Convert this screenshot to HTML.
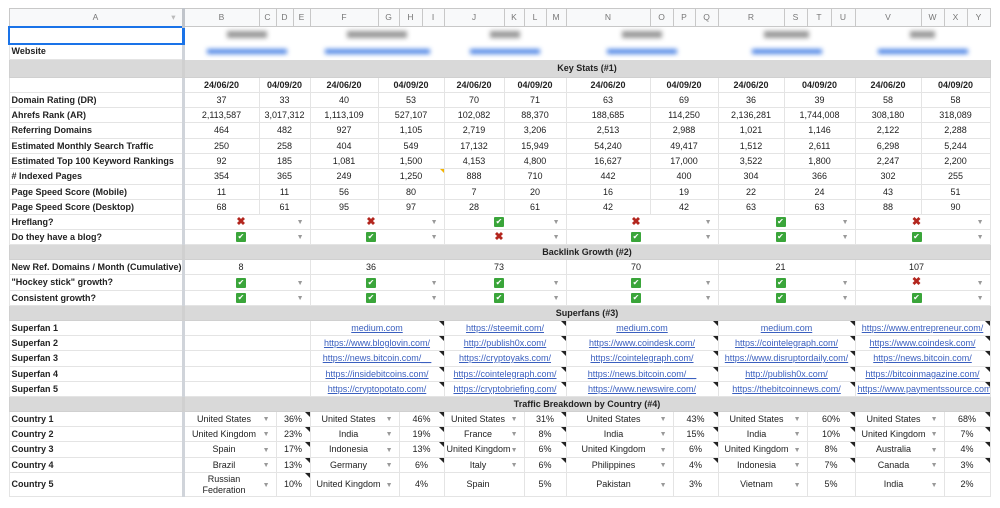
<!DOCTYPE html>
<html><head><meta charset="utf-8"><style>
body{margin:0;background:#fff;width:1000px;height:508px;overflow:hidden;font-family:"Liberation Sans",Arial,sans-serif}
table{position:absolute;left:8px;top:8px;border-collapse:collapse;table-layout:fixed;width:981px}
td{border:1px solid #e4e4e4;font-size:9px;color:#222;padding:0 2px;white-space:nowrap;overflow:hidden;text-align:center;position:relative;line-height:11px}
td.a{text-align:left;font-weight:bold;border-right:3px solid #d0d4da}
tr.h td{background:#f8f9fa;color:#777;border-color:#c8c8c8;font-size:8.5px}
tr.g td{background:#d9d9d9;border-color:#d0d0d0;font-weight:bold}
tr.d td{font-weight:bold}
.x{color:#b3261e;font-size:11px;font-weight:bold}
.c{display:inline-block;width:10px;height:10px;background:#3aa53a;border-radius:1px;color:#fff;font-size:8px;line-height:10px;vertical-align:middle}
.ar{position:absolute;right:6px;top:50%;margin-top:-5px;color:#999;font-size:7px}
td.k{padding-right:14px}
a{color:#3a5fbf;text-decoration:underline}
td.n::after{content:"";position:absolute;right:0;top:0;border-top:5px solid #222;border-left:5px solid transparent}
.bl{display:inline-block;filter:blur(2.5px)}
</style></head><body>
<table>
<colgroup><col style="width:174px"><col style="width:76px"><col style="width:17px"><col style="width:17px"><col style="width:17px"><col style="width:68px"><col style="width:21px"><col style="width:23px"><col style="width:22px"><col style="width:60px"><col style="width:20px"><col style="width:22px"><col style="width:20px"><col style="width:84px"><col style="width:23px"><col style="width:22px"><col style="width:23px"><col style="width:66px"><col style="width:23px"><col style="width:24px"><col style="width:24px"><col style="width:66px"><col style="width:23px"><col style="width:23px"><col style="width:23px"></colgroup>
<tr class="h" style="height:18px"><td style="border-right:3px solid #c0c4ca">A<span style="position:absolute;right:6px;color:#bbb">▾</span></td><td>B</td><td>C</td><td>D</td><td>E</td><td>F</td><td>G</td><td>H</td><td>I</td><td>J</td><td>K</td><td>L</td><td>M</td><td>N</td><td>O</td><td>P</td><td>Q</td><td>R</td><td>S</td><td>T</td><td>U</td><td>V</td><td>W</td><td>X</td><td>Y</td></tr>
<tr style="height:17px"><td class="a" style="border:2px solid #1a73e8;border-right:3px solid #1a73e8"></td><td colspan="4" style="border-color:#fff"><span class="bl" style="width:40px;height:7px;background:#999"></span></td><td colspan="4" style="border-color:#fff"><span class="bl" style="width:60px;height:7px;background:#999"></span></td><td colspan="4" style="border-color:#fff"><span class="bl" style="width:30px;height:7px;background:#999"></span></td><td colspan="4" style="border-color:#fff"><span class="bl" style="width:40px;height:7px;background:#999"></span></td><td colspan="4" style="border-color:#fff"><span class="bl" style="width:45px;height:7px;background:#999"></span></td><td colspan="4" style="border-color:#fff"><span class="bl" style="width:25px;height:7px;background:#999"></span></td></tr>
<tr style="height:16px"><td class="a">Website</td><td colspan="4" style="border-color:#fff"><span class="bl" style="width:80px;height:5px;background:#4f86e6"></span></td><td colspan="4" style="border-color:#fff"><span class="bl" style="width:105px;height:5px;background:#4f86e6"></span></td><td colspan="4" style="border-color:#fff"><span class="bl" style="width:70px;height:5px;background:#4f86e6"></span></td><td colspan="4" style="border-color:#fff"><span class="bl" style="width:70px;height:5px;background:#4f86e6"></span></td><td colspan="4" style="border-color:#fff"><span class="bl" style="width:70px;height:5px;background:#4f86e6"></span></td><td colspan="4" style="border-color:#fff"><span class="bl" style="width:90px;height:5px;background:#4f86e6"></span></td></tr>
<tr class="g" style="height:18px"><td class="a"></td><td colspan="24">Key Stats (#1)</td></tr>
<tr class="d" style="height:15px"><td class="a"></td><td>24/06/20</td><td colspan="3">04/09/20</td><td>24/06/20</td><td colspan="3">04/09/20</td><td>24/06/20</td><td colspan="3">04/09/20</td><td>24/06/20</td><td colspan="3">04/09/20</td><td>24/06/20</td><td colspan="3">04/09/20</td><td>24/06/20</td><td colspan="3">04/09/20</td></tr>
<tr style="height:15px"><td class="a">Domain Rating (DR)</td><td>37</td><td colspan="3">33</td><td>40</td><td colspan="3">53</td><td>70</td><td colspan="3">71</td><td>63</td><td colspan="3">69</td><td>36</td><td colspan="3">39</td><td>58</td><td colspan="3">58</td></tr>
<tr style="height:15px"><td class="a">Ahrefs Rank (AR)</td><td>2,113,587</td><td colspan="3">3,017,312</td><td>1,113,109</td><td colspan="3">527,107</td><td>102,082</td><td colspan="3">88,370</td><td>188,685</td><td colspan="3">114,250</td><td>2,136,281</td><td colspan="3">1,744,008</td><td>308,180</td><td colspan="3">318,089</td></tr>
<tr style="height:16px"><td class="a">Referring Domains</td><td>464</td><td colspan="3">482</td><td>927</td><td colspan="3">1,105</td><td>2,719</td><td colspan="3">3,206</td><td>2,513</td><td colspan="3">2,988</td><td>1,021</td><td colspan="3">1,146</td><td>2,122</td><td colspan="3">2,288</td></tr>
<tr style="height:15px"><td class="a">Estimated Monthly Search Traffic</td><td>250</td><td colspan="3">258</td><td>404</td><td colspan="3">549</td><td>17,132</td><td colspan="3">15,949</td><td>54,240</td><td colspan="3">49,417</td><td>1,512</td><td colspan="3">2,611</td><td>6,298</td><td colspan="3">5,244</td></tr>
<tr style="height:15px"><td class="a">Estimated Top 100 Keyword Rankings</td><td>92</td><td colspan="3">185</td><td>1,081</td><td colspan="3">1,500</td><td>4,153</td><td colspan="3">4,800</td><td>16,627</td><td colspan="3">17,000</td><td>3,522</td><td colspan="3">1,800</td><td>2,247</td><td colspan="3">2,200</td></tr>
<tr style="height:16px"><td class="a"># Indexed Pages</td><td>354</td><td colspan="3">365</td><td>249</td><td colspan="3" style="position:relative">1,250<span style="position:absolute;right:0;top:0;border-top:4px solid #f4b400;border-left:4px solid transparent"></span></td><td>888</td><td colspan="3">710</td><td>442</td><td colspan="3">400</td><td>304</td><td colspan="3">366</td><td>302</td><td colspan="3">255</td></tr>
<tr style="height:15px"><td class="a">Page Speed Score (Mobile)</td><td>11</td><td colspan="3">11</td><td>56</td><td colspan="3">80</td><td>7</td><td colspan="3">20</td><td>16</td><td colspan="3">19</td><td>22</td><td colspan="3">24</td><td>43</td><td colspan="3">51</td></tr>
<tr style="height:15px"><td class="a">Page Speed Score (Desktop)</td><td>68</td><td colspan="3">61</td><td>95</td><td colspan="3">97</td><td>28</td><td colspan="3">61</td><td>42</td><td colspan="3">42</td><td>63</td><td colspan="3">63</td><td>88</td><td colspan="3">90</td></tr>
<tr style="height:15px"><td class="a">Hreflang?</td><td colspan="4" class="k"><span class="x">✖</span><span class="ar">▼</span></td><td colspan="4" class="k"><span class="x">✖</span><span class="ar">▼</span></td><td colspan="4" class="k"><span class="c">✔</span><span class="ar">▼</span></td><td colspan="4" class="k"><span class="x">✖</span><span class="ar">▼</span></td><td colspan="4" class="k"><span class="c">✔</span><span class="ar">▼</span></td><td colspan="4" class="k"><span class="x">✖</span><span class="ar">▼</span></td></tr>
<tr style="height:15px"><td class="a">Do they have a blog?</td><td colspan="4" class="k"><span class="c">✔</span><span class="ar">▼</span></td><td colspan="4" class="k"><span class="c">✔</span><span class="ar">▼</span></td><td colspan="4" class="k"><span class="x">✖</span><span class="ar">▼</span></td><td colspan="4" class="k"><span class="c">✔</span><span class="ar">▼</span></td><td colspan="4" class="k"><span class="c">✔</span><span class="ar">▼</span></td><td colspan="4" class="k"><span class="c">✔</span><span class="ar">▼</span></td></tr>
<tr class="g" style="height:15px"><td class="a"></td><td colspan="24">Backlink Growth (#2)</td></tr>
<tr style="height:15px"><td class="a">New Ref. Domains / Month (Cumulative)</td><td colspan="4" class="k">8</td><td colspan="4" class="k">36</td><td colspan="4" class="k">73</td><td colspan="4" class="k">70</td><td colspan="4" class="k">21</td><td colspan="4" class="k">107</td></tr>
<tr style="height:16px"><td class="a">"Hockey stick" growth?</td><td colspan="4" class="k"><span class="c">✔</span><span class="ar">▼</span></td><td colspan="4" class="k"><span class="c">✔</span><span class="ar">▼</span></td><td colspan="4" class="k"><span class="c">✔</span><span class="ar">▼</span></td><td colspan="4" class="k"><span class="c">✔</span><span class="ar">▼</span></td><td colspan="4" class="k"><span class="c">✔</span><span class="ar">▼</span></td><td colspan="4" class="k"><span class="x">✖</span><span class="ar">▼</span></td></tr>
<tr style="height:15px"><td class="a">Consistent growth?</td><td colspan="4" class="k"><span class="c">✔</span><span class="ar">▼</span></td><td colspan="4" class="k"><span class="c">✔</span><span class="ar">▼</span></td><td colspan="4" class="k"><span class="c">✔</span><span class="ar">▼</span></td><td colspan="4" class="k"><span class="c">✔</span><span class="ar">▼</span></td><td colspan="4" class="k"><span class="c">✔</span><span class="ar">▼</span></td><td colspan="4" class="k"><span class="c">✔</span><span class="ar">▼</span></td></tr>
<tr class="g" style="height:15px"><td class="a"></td><td colspan="24">Superfans (#3)</td></tr>
<tr style="height:15px"><td class="a">Superfan 1</td><td colspan="4"></td><td colspan="4" class="n"><a>medium.com</a></td><td colspan="4" class="n"><a>https://steemit.com/</a></td><td colspan="4" class="n"><a>medium.com</a></td><td colspan="4" class="n"><a>medium.com</a></td><td colspan="4" class="n"><a>https://www.entrepreneur.com/</a></td></tr>
<tr style="height:15px"><td class="a">Superfan 2</td><td colspan="4"></td><td colspan="4" class="n"><a>https://www.bloglovin.com/</a></td><td colspan="4" class="n"><a>http://publish0x.com/</a></td><td colspan="4" class="n"><a>https://www.coindesk.com/</a></td><td colspan="4" class="n"><a>https://cointelegraph.com/</a></td><td colspan="4" class="n"><a>https://www.coindesk.com/</a></td></tr>
<tr style="height:16px"><td class="a">Superfan 3</td><td colspan="4"></td><td colspan="4" class="n"><a>https://news.bitcoin.com/__</a></td><td colspan="4" class="n"><a>https://cryptoyaks.com/</a></td><td colspan="4" class="n"><a>https://cointelegraph.com/</a></td><td colspan="4" class="n"><a>https://www.disruptordaily.com/</a></td><td colspan="4" class="n"><a>https://news.bitcoin.com/</a></td></tr>
<tr style="height:15px"><td class="a">Superfan 4</td><td colspan="4"></td><td colspan="4" class="n"><a>https://insidebitcoins.com/</a></td><td colspan="4" class="n"><a>https://cointelegraph.com/</a></td><td colspan="4" class="n"><a>https://news.bitcoin.com/__</a></td><td colspan="4" class="n"><a>http://publish0x.com/</a></td><td colspan="4" class="n"><a>https://bitcoinmagazine.com/</a></td></tr>
<tr style="height:15px"><td class="a">Superfan 5</td><td colspan="4"></td><td colspan="4" class="n"><a>https://cryptopotato.com/</a></td><td colspan="4" class="n"><a>https://cryptobriefing.com/</a></td><td colspan="4" class="n"><a>https://www.newswire.com/</a></td><td colspan="4" class="n"><a>https://thebitcoinnews.com/</a></td><td colspan="4" class="n"><a>https://www.paymentssource.com/</a></td></tr>
<tr class="g" style="height:15px"><td class="a"></td><td colspan="24">Traffic Breakdown by Country (#4)</td></tr>
<tr style="height:15px"><td class="a">Country 1</td><td colspan="2" class="k">United States<span class="ar">▼</span></td><td colspan="2" class="n">36%</td><td colspan="2" class="k">United States<span class="ar">▼</span></td><td colspan="2" class="n">46%</td><td colspan="2" class="k">United States<span class="ar">▼</span></td><td colspan="2" class="n">31%</td><td colspan="2" class="k">United States<span class="ar">▼</span></td><td colspan="2" class="n">43%</td><td colspan="2" class="k">United States<span class="ar">▼</span></td><td colspan="2" class="n">60%</td><td colspan="2" class="k">United States<span class="ar">▼</span></td><td colspan="2" class="n">68%</td></tr>
<tr style="height:15px"><td class="a">Country 2</td><td colspan="2" class="k">United Kingdom<span class="ar">▼</span></td><td colspan="2" class="n">23%</td><td colspan="2" class="k">India<span class="ar">▼</span></td><td colspan="2" class="n">19%</td><td colspan="2" class="k">France<span class="ar">▼</span></td><td colspan="2" class="n">8%</td><td colspan="2" class="k">India<span class="ar">▼</span></td><td colspan="2" class="n">15%</td><td colspan="2" class="k">India<span class="ar">▼</span></td><td colspan="2" class="n">10%</td><td colspan="2" class="k">United Kingdom<span class="ar">▼</span></td><td colspan="2" class="n">7%</td></tr>
<tr style="height:16px"><td class="a">Country 3</td><td colspan="2" class="k">Spain<span class="ar">▼</span></td><td colspan="2" class="n">17%</td><td colspan="2" class="k">Indonesia<span class="ar">▼</span></td><td colspan="2" class="n">13%</td><td colspan="2" class="k">United Kingdom<span class="ar">▼</span></td><td colspan="2" class="n">6%</td><td colspan="2" class="k">United Kingdom<span class="ar">▼</span></td><td colspan="2" class="n">6%</td><td colspan="2" class="k">United Kingdom<span class="ar">▼</span></td><td colspan="2" class="n">8%</td><td colspan="2" class="k">Australia<span class="ar">▼</span></td><td colspan="2" class="n">4%</td></tr>
<tr style="height:15px"><td class="a">Country 4</td><td colspan="2" class="k">Brazil<span class="ar">▼</span></td><td colspan="2" class="n">13%</td><td colspan="2" class="k">Germany<span class="ar">▼</span></td><td colspan="2" class="n">6%</td><td colspan="2" class="k">Italy<span class="ar">▼</span></td><td colspan="2" class="n">6%</td><td colspan="2" class="k">Philippines<span class="ar">▼</span></td><td colspan="2" class="n">4%</td><td colspan="2" class="k">Indonesia<span class="ar">▼</span></td><td colspan="2" class="n">7%</td><td colspan="2" class="k">Canada<span class="ar">▼</span></td><td colspan="2" class="n">3%</td></tr>
<tr style="height:24px;border-bottom:1px solid #c8c8c8"><td class="a">Country 5</td><td colspan="2" class="k" style="white-space:normal">Russian<br>Federation<span class="ar">▼</span></td><td colspan="2" class="n">10%</td><td colspan="2" class="k">United Kingdom<span class="ar">▼</span></td><td colspan="2">4%</td><td colspan="2" class="k">Spain</td><td colspan="2">5%</td><td colspan="2" class="k">Pakistan<span class="ar">▼</span></td><td colspan="2">3%</td><td colspan="2" class="k">Vietnam<span class="ar">▼</span></td><td colspan="2">5%</td><td colspan="2" class="k">India<span class="ar">▼</span></td><td colspan="2">2%</td></tr>
</table>
</body></html>
